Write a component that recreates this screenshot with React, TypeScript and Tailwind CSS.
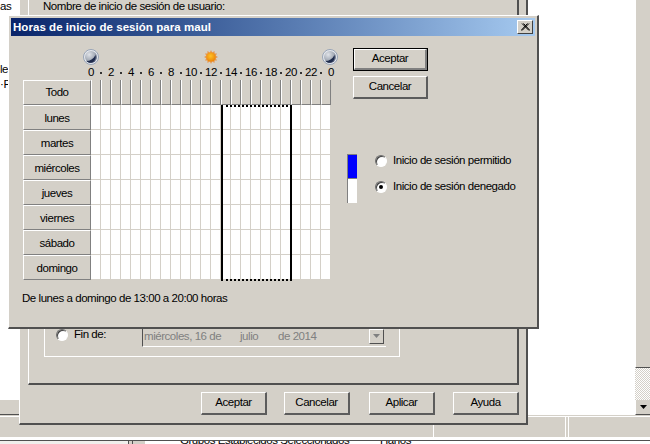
const hours = Array.from({ length: 24 }, (_, i) => i)
const days = ['lunes', 'martes', 'miércoles', 'jueves', 'viernes', 'sábado', 'domingo']
const ticks = Array.from({ length: 25 }, (_, i) => i)

function Moon() {
  return (
    <svg width="16" height="16" viewBox="0 0 16 16" className="shrink-0">
      <defs>
        <radialGradient id="moonFill" cx="0.35" cy="0.3" r="0.8">
          <stop offset="0" stopColor="#e0e3e8" />
          <stop offset="0.6" stopColor="#a3aab6" />
          <stop offset="1" stopColor="#4a5570" />
        </radialGradient>
      </defs>
      <circle cx="8" cy="8" r="7.5" fill="#e6e9ee" stroke="#97a3b6" strokeWidth="1" />
      <circle cx="8" cy="8" r="6" fill="url(#moonFill)" />
      <path d="M3.5 12C7 12 10.5 10 12.5 6C13.5 9.5 11.5 13.5 8 13.8C6 14 4.5 13.2 3.5 12Z" fill="#1f2c4d" />
    </svg>
  )
}

function Sun() {
  return (
    <svg width="14" height="14" viewBox="0 0 14 14" className="shrink-0">
      <defs>
        <radialGradient id="sunFill" cx="0.45" cy="0.4" r="0.6">
          <stop offset="0" stopColor="#ffc227" />
          <stop offset="1" stopColor="#ec8508" />
        </radialGradient>
      </defs>
      <path
        d="M7 0L8.2 2.4L10.5 1L10.6 3.4L13 3.5L11.7 5.7L14 7L11.7 8.3L13 10.5L10.6 10.6L10.5 13L8.2 11.6L7 14L5.8 11.6L3.5 13L3.4 10.6L1 10.5L2.3 8.3L0 7L2.3 5.7L1 3.5L3.4 3.4L3.5 1L5.8 2.4Z"
        fill="#e8974a"
      />
      <circle cx="7" cy="7" r="4.6" fill="url(#sunFill)" />
    </svg>
  )
}

function Radio({ checked }: { checked?: boolean }) {
  return (
    <span className="flex h-3 w-3 shrink-0 items-center justify-center rounded-full border border-t-[#6b6b6b] border-l-[#6b6b6b] border-r-white border-b-white bg-white shadow-[inset_1px_1px_0_#404040]">
      {checked && <span className="h-1 w-1 rounded-full bg-black" />}
    </span>
  )
}

function Btn({ label, isDefault, wide }: { label: string; isDefault?: boolean; wide?: boolean }) {
  if (isDefault) {
    return (
      <div className="h-[23px] w-[75px] border border-black">
        <div className="flex h-full items-center justify-center border-t border-l border-white border-r-2 border-b-2 border-r-[#808080] border-b-[#808080] pb-px">
          {label}
        </div>
      </div>
    )
  }
  return (
    <div
      className={`flex h-[23px] items-center justify-center border-t border-l border-white border-r-2 border-b-2 border-r-[#5c5c5c] border-b-[#5c5c5c] pb-px ${
        wide ? 'w-[66px]' : 'w-[75px]'
      }`}
    >
      {label}
    </div>
  )
}

function BackWindow() {
  return (
    <div className="absolute left-[19px] top-[-10px] flex h-[435px] w-[509px] flex-col border-l border-white border-r-2 border-b-2 border-r-[#505050] border-b-[#505050] bg-[#d4d0c8]">
      <div className="ml-[8px] flex h-[395px] w-[491px] flex-col justify-between border-l border-white border-r-2 border-b-2 border-r-[#505050] border-b-[#505050] pb-[26px]">
        <div className="pl-[14px] pt-[10px]">Nombre de inicio de sesión de usuario:</div>
        <div className="ml-[15px] flex h-[60px] w-[356px] flex-col justify-end border border-white pb-[9px] pl-[11px]">
          <div className="flex h-[20px] items-center pb-[5px]">
            <Radio />
            <span className="ml-[6px] w-[68px]">Fin de:</span>
            <div className="-mb-[5px] flex h-[18px] w-[244px] items-center justify-between self-end border-b border-white border-l border-l-[#505050] pb-[3px] pl-px text-[#808080]">
              <span className="flex">
                <span className="w-[96px]">miércoles, 16 de</span>
                <span className="w-[38px]">julio</span>
                <span>de 2014</span>
              </span>
              <span className="mr-[2px] flex h-[15px] w-[15px] items-center justify-center border-t border-l border-white border-r border-b border-r-[#505050] border-b-[#505050]">
                <svg width="7" height="4" viewBox="0 0 7 4">
                  <path d="M0 0H7L3.5 4Z" fill="#808080" />
                </svg>
              </span>
            </div>
          </div>
        </div>
      </div>
      <div className="mt-[7px] flex pl-[181px]">
        <Btn label="Aceptar" wide />
        <div className="ml-[17px]"><Btn label="Cancelar" wide /></div>
        <div className="ml-[19px]"><Btn label="Aplicar" wide /></div>
        <div className="ml-[18px]"><Btn label="Ayuda" wide /></div>
      </div>
    </div>
  )
}

function LogonDialog() {
  return (
    <div className="absolute left-[8px] top-[15px] h-[314px] w-[531px] border-t border-l border-white border-r-2 border-b-2 border-r-[#505050] border-b-[#505050] bg-[#d4d0c8] pl-[2px] pt-[2px]">
      <div className="flex h-[18px] w-[524px] items-center justify-between bg-gradient-to-r from-[#0a246a] to-[#a6caf0] pl-[2px] pr-[2px]">
        <span className="font-bold tracking-[0.05px] text-white">Horas de inicio de sesión para maul</span>
        <span className="flex h-[14px] w-[16px] items-center justify-center border-t border-l border-white border-r border-b border-r-[#404040] border-b-[#404040] bg-[#d4d0c8]">
          <svg width="9" height="8" viewBox="0 0 9 8">
            <path d="M1 0.5L8 7.5M2.5 0.5L9 7.5M8 0.5L1 7.5M6.5 0.5L0 7.5" stroke="#000" strokeWidth="1" fill="none" />
          </svg>
        </span>
      </div>
      <div className="flex">
        <div className="ml-[12px] w-[308px]">
          <div className="mt-[13px] flex h-[16px] items-center pl-[60px]">
            <Moon />
            <div className="ml-[105px]"><Sun /></div>
            <div className="ml-[104px]"><Moon /></div>
          </div>
          <div className="flex h-[15px] items-center pl-[63px] text-black">
            {ticks.map((t) => (
              <span key={t} className="flex w-[10px] shrink-0 justify-center">
                {t % 2 === 0 ? t % 24 : <span className="h-[2px] w-[2px] bg-[#333333]" />}
              </span>
            ))}
          </div>
          <div className="relative">
            <div className="flex h-[25px]">
              <div className="flex w-[68px] items-center justify-center border-t border-l border-white border-r border-b border-r-[#808080] border-b-[#808080]">
                Todo
              </div>
              {hours.map((h) => (
                <div key={h} className="w-[10px] border-l border-white border-r border-r-[#808080] border-b border-b-[#808080]" />
              ))}
            </div>
            {days.map((d) => (
              <div key={d} className="flex h-[25px]">
                <div className="flex w-[68px] items-center justify-center border-t border-l border-white border-r border-b border-r-[#808080] border-b-[#808080] pt-px">
                  {d}
                </div>
                {hours.map((h) => (
                  <div key={h} className="w-[10px] border-r border-b border-[#d4d0c8] bg-white" />
                ))}
              </div>
            ))}
            <div className="absolute left-[198px] top-[25px] h-[176px] w-[71px] border-2 border-black [border-top-style:dotted] [border-bottom-style:dotted]" />
          </div>
          <div className="-ml-px mt-[12px]">De lunes a domingo de 13:00 a 20:00 horas</div>
        </div>
        <div className="ml-[16px]">
          <div className="mt-[12px] ml-[6px] flex flex-col gap-[5px]">
            <Btn label="Aceptar" isDefault />
            <Btn label="Cancelar" />
          </div>
          <div className="mt-[55px] flex">
            <div className="h-[49px] w-[10px] border-t border-l border-[#808080]">
              <div className="h-[24px] border-b border-[#808080] bg-[#0000ff]" />
              <div className="h-[24px] bg-white" />
            </div>
            <div className="ml-[18px] flex flex-col gap-[13px]">
              <div className="flex h-[13px] items-center">
                <Radio />
                <span className="ml-[6px]">Inicio de sesión permitido</span>
              </div>
              <div className="flex h-[13px] items-center">
                <Radio checked />
                <span className="ml-[6px]">Inicio de sesión denegado</span>
              </div>
            </div>
          </div>
        </div>
      </div>
    </div>
  )
}

export default function App() {
  return (
    <div className="relative h-[444px] w-[650px] overflow-hidden bg-white font-['Liberation_Sans',sans-serif] text-[11.5px] leading-[13px] tracking-[-0.45px] text-black">
      {/* list behind the windows */}
      <div className="flex h-[415px]">
        <div className="flex w-[20px] flex-col">
          <div className="h-[400px]">
            <div>as</div>
            <div className="mt-[50px]">le</div>
            <div className="mt-[2px]">·P</div>
          </div>
          <div className="h-[15px] border-t border-[#d4d0c8] border-b border-b-[#505050] bg-[#d4d0c8]" />
        </div>
        <div className="flex-1" />
        <div className="flex w-[15px] flex-col">
          <div className="h-[368px] border-l border-white border-b border-b-[#505050] bg-[#d4d0c8]" />
          <div className="h-[32px] bg-[repeating-conic-gradient(#d4d0c8_0_25%,#fff_0_50%)] bg-[length:2px_2px]" />
          <div className="flex h-[15px] items-center justify-center border-l border-white border-b border-b-[#505050] bg-[#d4d0c8]">
            <svg width="7" height="4" viewBox="0 0 7 4">
              <path d="M0 0H7L3.5 4Z" fill="#000" />
            </svg>
          </div>
        </div>
      </div>
      {/* status bar */}
      <div className="flex h-[25px] border-t border-[#d4d0c8] border-b-[3px] border-b-white bg-[#d4d0c8] shadow-[inset_0_1px_0_#fff]">
        <div className="w-[433px]" />
        <div className="w-[133px] border-l border-r border-white" />
        <div className="ml-[2px] flex-1 border-l border-white" />
      </div>
      <div className="relative flex h-[4px] overflow-hidden border-t border-[#505050]">
        <div className="w-[128px] bg-[#f0efec]" />
        <div className="w-[5px] border-x border-[#505050] bg-[#d4d0c8]" />
        <div className="w-[12px] bg-[#d4d0c8]" />
        <span className="absolute left-[180px] top-[-7px] whitespace-nowrap">Grupos Establecidos Seleccionados</span>
        <span className="absolute left-[380px] top-[-7px]">Hanos</span>
      </div>
      <BackWindow />
      <LogonDialog />
    </div>
  )
}
